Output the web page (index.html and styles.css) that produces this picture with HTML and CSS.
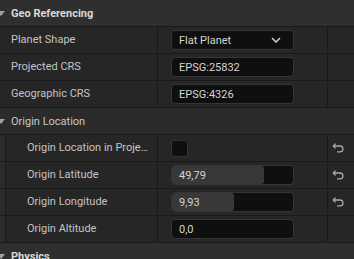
FILE: index.html
```html
<!DOCTYPE html>
<html>
<head>
<meta charset="utf-8">
<link rel="stylesheet" href="styles.css">
</head>
<body>
<div class="panel">
  <div class="cat"><span class="tri"></span><span>Geo Referencing</span></div>
  <div class="row">
    <div class="name">Planet Shape</div>
    <div class="val">
      <div class="field combo"><span>Flat Planet</span>
        <svg class="chev" width="10" height="6" viewBox="0 0 10 6"><path d="M1 1 L5 5 L9 1" fill="none" stroke="#d0d0d0" stroke-width="1.5"/></svg>
      </div>
    </div>
    <div class="reset"></div>
  </div>
  <div class="row">
    <div class="name">Projected CRS</div>
    <div class="val"><div class="field">EPSG:25832</div></div>
    <div class="reset"></div>
  </div>
  <div class="row">
    <div class="name">Geographic CRS</div>
    <div class="val"><div class="field">EPSG:4326</div></div>
    <div class="reset"></div>
  </div>
  <div class="cat group"><span class="tri"></span><span>Origin Location</span></div>
  <div class="row sub">
    <div class="indent"></div>
    <div class="name">Origin Location in Projected CRS</div>
    <div class="val"><div class="check"></div></div>
    <div class="reset"><svg width="12" height="10" viewBox="0 0 12 10"><path d="M3.6 0.6 L1.2 3 L3.6 5.4 M1.2 3 H8 A2.9 2.9 0 0 1 8 8.8 H5" fill="none" stroke="#a8a8a8" stroke-width="1.3"/></svg></div>
  </div>
  <div class="row sub">
    <div class="indent"></div>
    <div class="name">Origin Latitude</div>
    <div class="val"><div class="field num"><div class="fill" style="width:76%"></div><span class="txt">49,79</span></div></div>
    <div class="reset"><svg width="12" height="10" viewBox="0 0 12 10"><path d="M3.6 0.6 L1.2 3 L3.6 5.4 M1.2 3 H8 A2.9 2.9 0 0 1 8 8.8 H5" fill="none" stroke="#a8a8a8" stroke-width="1.3"/></svg></div>
  </div>
  <div class="row sub">
    <div class="indent"></div>
    <div class="name">Origin Longitude</div>
    <div class="val"><div class="field num"><div class="fill" style="width:51%"></div><span class="txt">9,93</span></div></div>
    <div class="reset"><svg width="12" height="10" viewBox="0 0 12 10"><path d="M3.6 0.6 L1.2 3 L3.6 5.4 M1.2 3 H8 A2.9 2.9 0 0 1 8 8.8 H5" fill="none" stroke="#a8a8a8" stroke-width="1.3"/></svg></div>
  </div>
  <div class="row sub">
    <div class="indent"></div>
    <div class="name">Origin Altitude</div>
    <div class="val"><div class="field num"><div class="fill" style="width:0%"></div><span class="txt">0,0</span></div></div>
    <div class="reset"></div>
  </div>
  <div class="cat"><span class="tri"></span><span>Physics</span></div>
</div>
</body>
</html>
```
FILE: styles.css
```css
* { box-sizing: border-box; }
html, body { margin: 0; padding: 0; }
body {
  width: 354px;
  height: 259px;
  overflow: hidden;
  background: #262626;
  font-family: Roboto, "Noto Sans", sans-serif;
  font-size: 11px;
  color: #c4c4c4;
}
.cat {
  height: 27px;
  background: #2f2f2f;
  border-bottom: 1px solid #1a1a1a;
  display: flex;
  align-items: center;
  font-weight: 700;
  color: #d8d8d8;
}
.cat.group {
  font-weight: 400;
  color: #c8c8c8;
  background: #2b2b2b;
}
.tri {
  width: 0;
  height: 0;
  margin-left: -3px;
  margin-right: 6px;
  border-left: 4px solid transparent;
  border-right: 4px solid transparent;
  border-top: 5px solid #a0a0a0;
}
.row {
  display: grid;
  grid-template-columns: 158px 170px 26px;
  height: 27px;
  border-bottom: 1px solid #1a1a1a;
}
.row.sub {
  grid-template-columns: 6px 152px 170px 26px;
}
.indent {
  background: #2c2c2c;
  border-right: 1px solid #1a1a1a;
}
.name {
  border-right: 1px solid #1a1a1a;
  padding-left: 11px;
  padding-right: 4px;
  line-height: 26px;
  white-space: nowrap;
  overflow: hidden;
  text-overflow: ellipsis;
}
.sub .name { padding-left: 21px; }
.val {
  border-right: 1px solid #1a1a1a;
  display: flex;
  align-items: center;
  padding-left: 13px;
}
.field {
  width: 123px;
  height: 20px;
  background: #0f0f0f;
  border: 1px solid #353535;
  border-radius: 4px;
  padding-left: 7px;
  display: flex;
  align-items: center;
  color: #d4d4d4;
}
.combo {
  justify-content: space-between;
  padding-right: 12px;
}
.chev { display: block; }
.num {
  display: grid;
  padding: 0;
  overflow: hidden;
}
.num .fill, .num .txt { grid-area: 1 / 1; }
.num .fill {
  height: 100%;
  background: #383838;
  border-radius: 3px;
}
.num .txt {
  align-self: center;
  padding-left: 7px;
}
.check {
  width: 17px;
  height: 17px;
  background: #0f0f0f;
  border: 1px solid #333333;
  border-radius: 3px;
}
.reset {
  display: flex;
  align-items: center;
  padding-left: 4px;
}
.reset svg { display: block; }
```
